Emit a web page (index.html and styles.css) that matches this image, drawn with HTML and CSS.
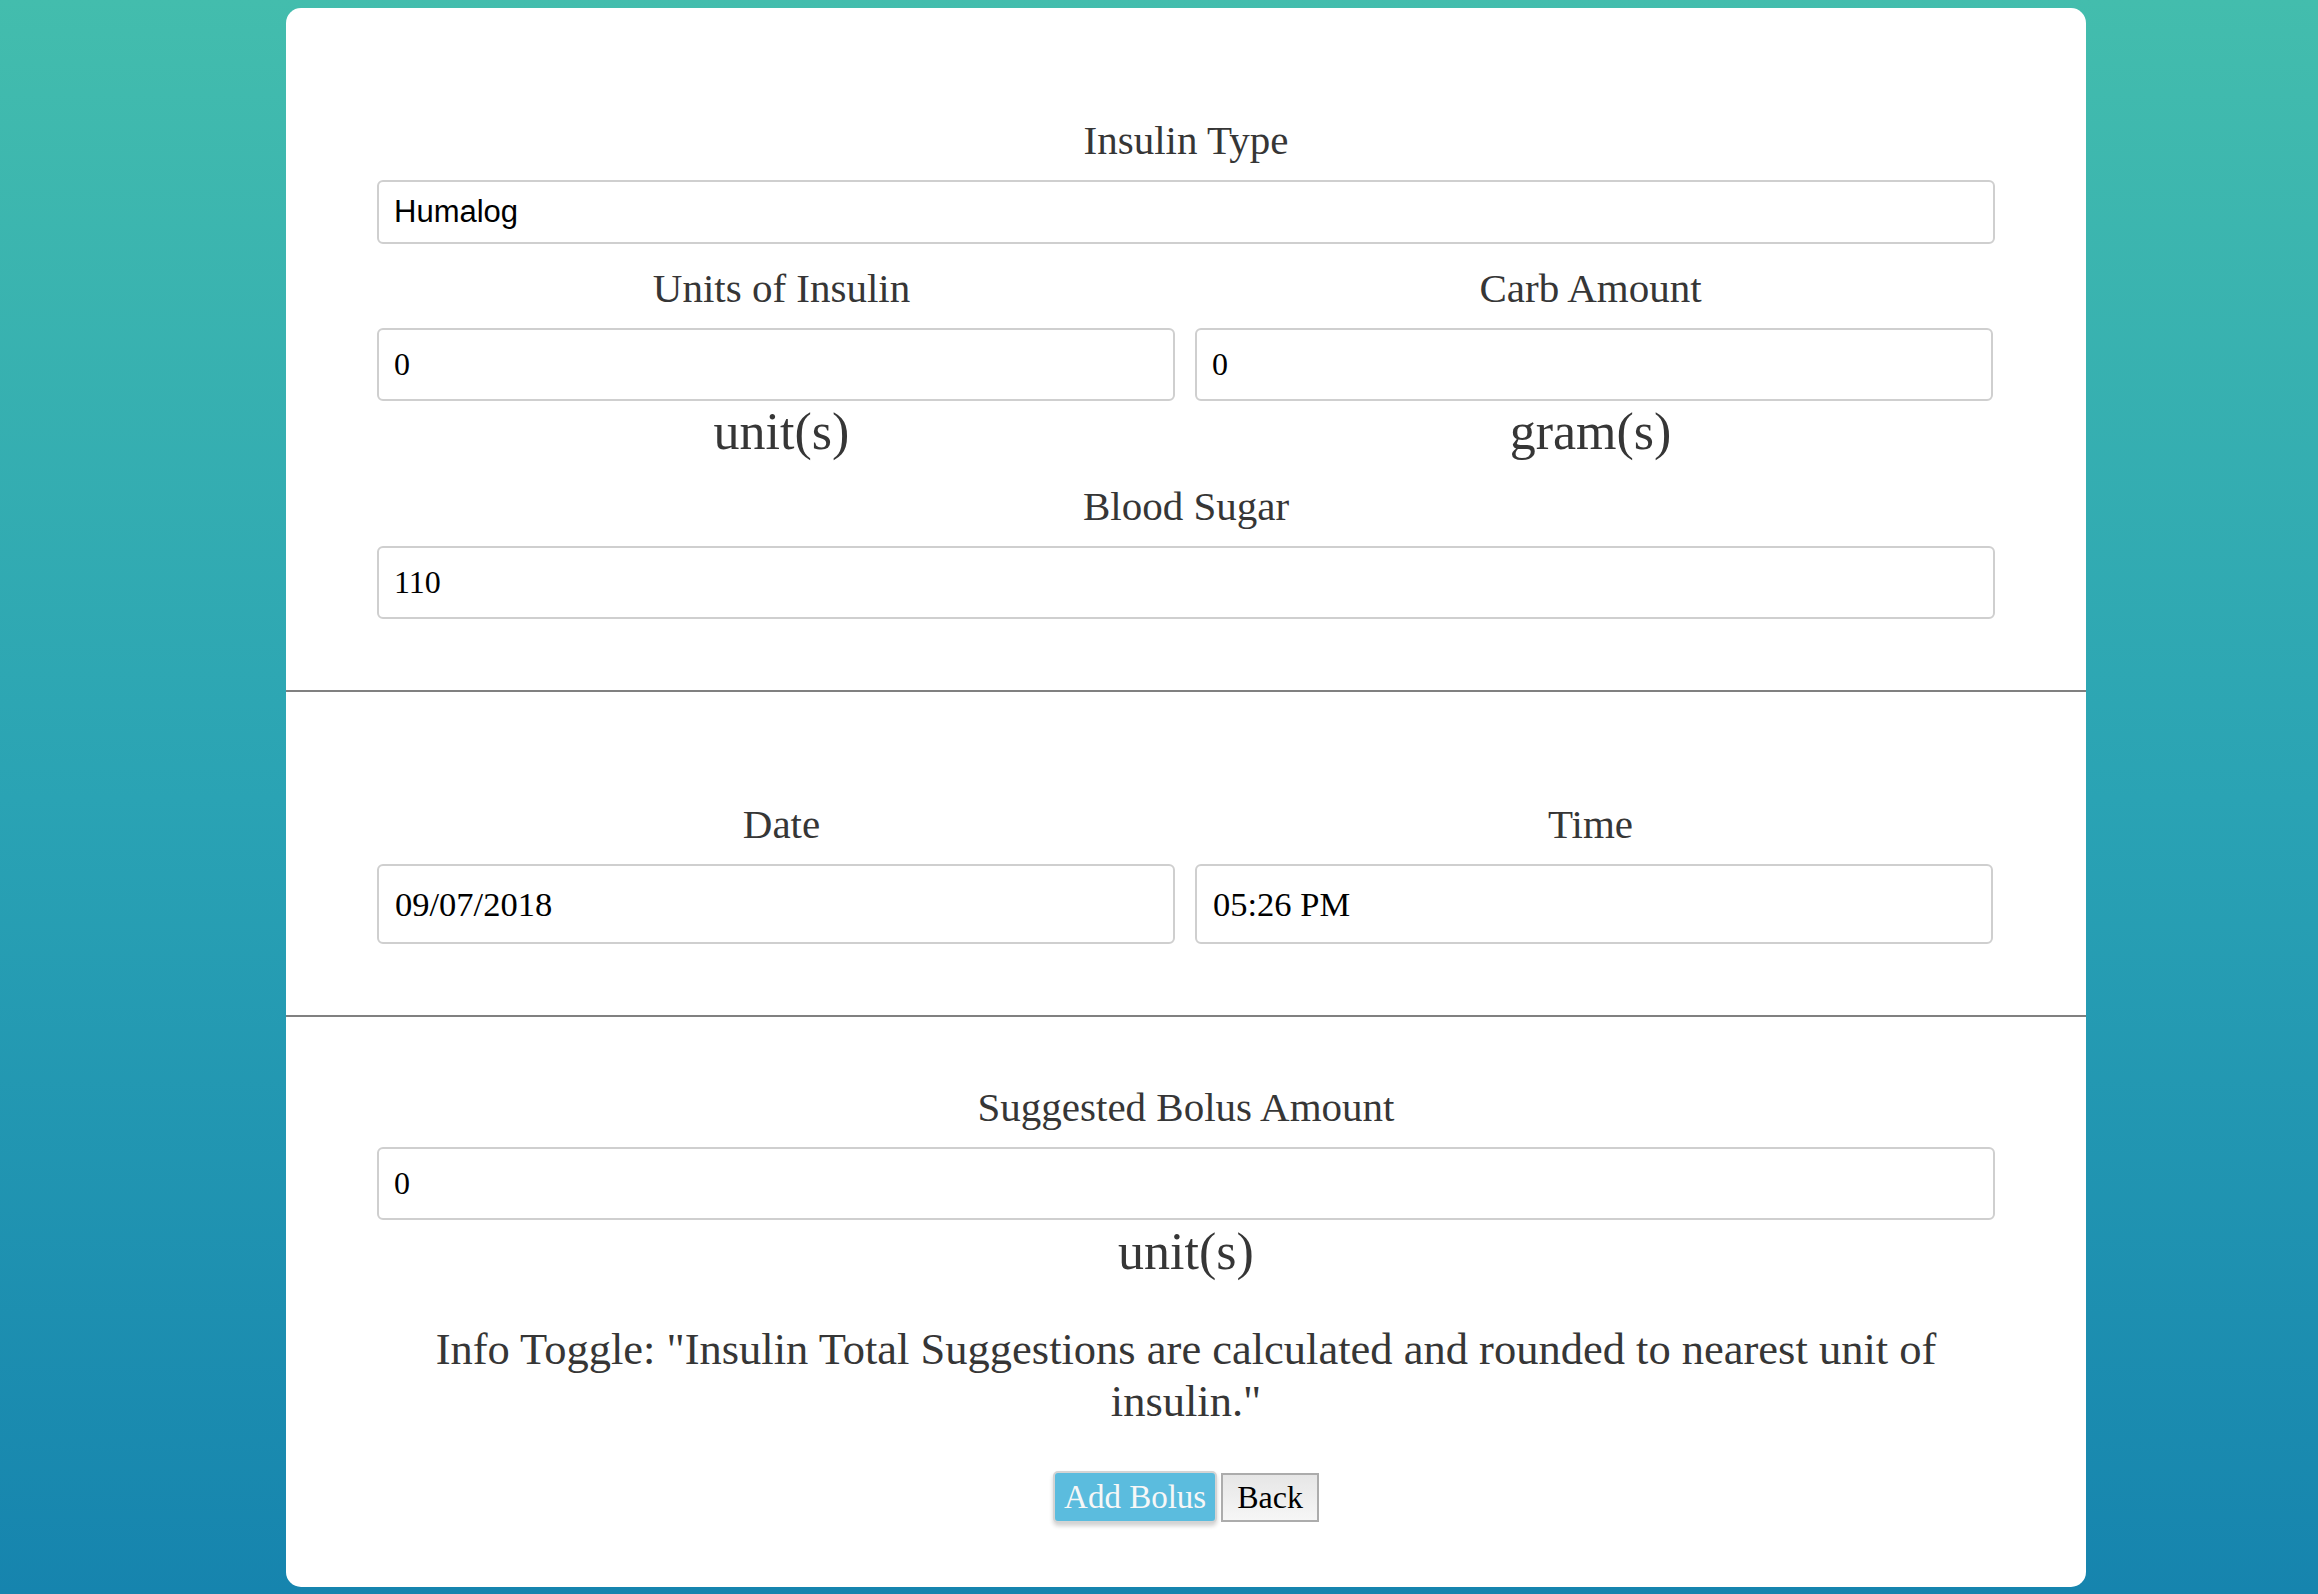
FILE: index.html
```html
<!DOCTYPE html>
<html lang="en">
<head>
<meta charset="utf-8">
<title>Add Bolus</title>
<link rel="stylesheet" href="styles.css">
</head>
<body>
<div class="card">
  <section class="sec sec-top">
    <div class="field">
      <label class="lbl">Insulin Type</label>
      <input class="inp inp-sans" type="text" value="Humalog">
    </div>
    <div class="cols cols-units">
      <div class="field col-left">
        <label class="lbl">Units of Insulin</label>
        <input class="inp" type="text" value="0">
        <div class="unit">unit(s)</div>
      </div>
      <div class="field col-right">
        <label class="lbl">Carb Amount</label>
        <input class="inp" type="text" value="0">
        <div class="unit">gram(s)</div>
      </div>
    </div>
    <div class="field field-sugar">
      <label class="lbl">Blood Sugar</label>
      <input class="inp" type="text" value="110">
    </div>
  </section>
  <section class="sec sec-date">
    <div class="cols">
      <div class="field col-left">
        <label class="lbl">Date</label>
        <input class="inp inp-date" type="text" value="09/07/2018">
      </div>
      <div class="field col-right">
        <label class="lbl">Time</label>
        <input class="inp inp-date" type="text" value="05:26 PM">
      </div>
    </div>
  </section>
  <section class="sec sec-bolus">
    <div class="field">
      <label class="lbl">Suggested Bolus Amount</label>
      <input class="inp" type="text" value="0">
      <div class="unit unit-bolus">unit(s)</div>
    </div>
    <p class="info">Info Toggle: "Insulin Total Suggestions are calculated and rounded to nearest unit of insulin."</p>
    <div class="actions">
      <button class="btn btn-add" type="button">Add Bolus</button>
      <button class="btn btn-back" type="button">Back</button>
    </div>
  </section>
</div>
</body>
</html>
```
FILE: styles.css
```css
html {
  min-height: 100%;
  background: linear-gradient(to bottom, #43bdad 0%, #2aa3b4 50%, #1684ae 100%);
}

body {
  margin: 8px;
  font-family: "Liberation Serif", "Times New Roman", serif;
  color: #333333;
}

.card {
  width: 1800px;
  margin-left: 278px;
  background: #ffffff;
  border-radius: 15px;
  box-sizing: border-box;
}

.sec {
  padding: 0 91px;
}

.sec + .sec {
  border-top: 2px solid #808080;
}

.sec-top {
  padding-top: 108px;
  padding-bottom: 71px;
}

.sec-date {
  padding-top: 108px;
  padding-bottom: 71px;
}

.sec-bolus {
  padding-top: 66px;
  padding-bottom: 64px;
}

.field {
  display: flex;
  flex-direction: column;
  align-items: stretch;
}

.lbl {
  display: block;
  text-align: center;
  font-size: 41px;
  line-height: 48px;
  color: #363636;
  margin-bottom: 16px;
}

.cols {
  display: grid;
  grid-template-columns: 1fr 1fr;
}

.col-left .inp {
  width: calc(100% - 11px);
}

.col-right .inp {
  width: calc(100% - 11px);
  margin-left: 9px;
}

.cols-units {
  margin-top: 20px;
}

.field-sugar {
  margin-top: 22px;
}

.inp {
  display: block;
  width: 100%;
  box-sizing: border-box;
  height: 73px;
  margin: 0;
  padding: 0 15px;
  border: 2px solid #cfcfcf;
  border-radius: 6px;
  background: #ffffff;
  font-family: "Liberation Serif", "Times New Roman", serif;
  font-size: 32px;
  color: #000000;
  outline: none;
}

.inp-sans {
  height: 64px;
  font-family: "Liberation Sans", Arial, sans-serif;
  font-size: 31px;
}

.inp-date {
  height: 80px;
  font-size: 34.5px;
  padding-left: 16px;
}

.unit {
  text-align: center;
  font-size: 52px;
  line-height: 56px;
  margin-top: 3px;
  color: #363636;
}

.unit-bolus {
  margin-top: 4px;
}

.info {
  margin: 43px 0 0;
  text-align: center;
  font-size: 44.5px;
  line-height: 52px;
  color: #363636;
}

.actions {
  margin-top: 44px;
  display: flex;
  justify-content: center;
  align-items: center;
  gap: 4px;
}

.btn {
  margin: 0;
  font-family: "Liberation Serif", "Times New Roman", serif;
  cursor: pointer;
}

.btn-add {
  height: 52px;
  padding: 0 9px;
  font-size: 33px;
  color: #f7f7f7;
  background: #5bbcde;
  border: 2px solid #d4d4d4;
  border-radius: 5px;
  box-shadow: 0 3px 4px rgba(0, 0, 0, 0.18);
}

.btn-back {
  height: 49px;
  padding: 0 14px;
  font-size: 32px;
  color: #000000;
  background: linear-gradient(to bottom, #e6e6e6, #f6f6f6);
  border: 2px solid #acacac;
  border-radius: 0;
}
```
